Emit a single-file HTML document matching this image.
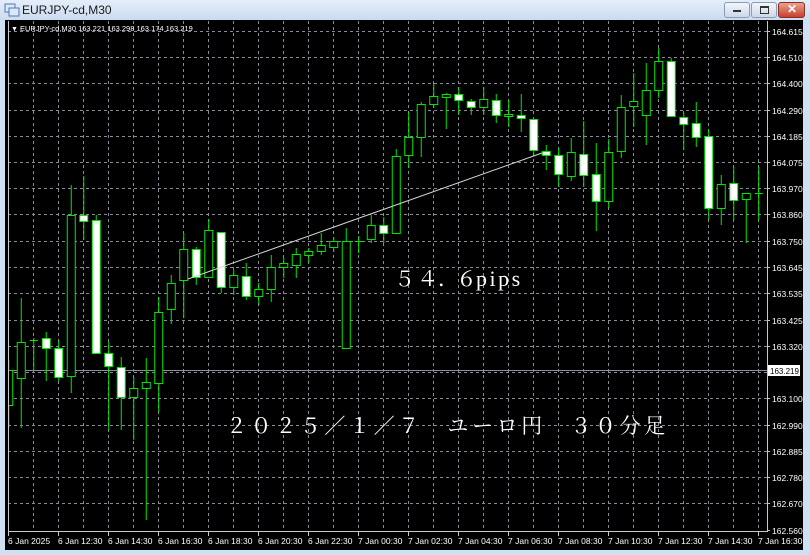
<!DOCTYPE html>
<html><head><meta charset="utf-8"><style>
html,body{margin:0;padding:0;width:810px;height:555px;overflow:hidden;background:#cfe0f2;font-family:"Liberation Sans",sans-serif}
#title{position:absolute;left:0;top:0;width:810px;height:20px;background:linear-gradient(#e4eefa,#cadcf0)}
#title .t{position:absolute;left:22px;top:3px;font-size:12px;color:#1a1a1a}
.btn{position:absolute;top:2px;height:14px;border:1px solid #8a9bb5;border-radius:3px;background:linear-gradient(#f2f6fb,#cdd9e8)}
</style></head><body>
<div id="title">
<svg style="position:absolute;left:4px;top:3px" width="16" height="14"><rect x="1" y="1" width="10" height="8" fill="#dde8f6" stroke="#4a78b8"/><rect x="5" y="5" width="10" height="8" fill="#dde8f6" stroke="#4a78b8"/></svg>
<span class="t">EURJPY-cd,M30</span>
<div class="btn" style="left:724px;width:24px"><div style="position:absolute;left:8px;top:7px;width:8px;height:2px;background:#333"></div></div>
<div class="btn" style="left:751px;width:24px"><div style="position:absolute;left:8px;top:3px;width:7px;height:5px;border:1px solid #333;border-top-width:2px"></div></div>
<div class="btn" style="left:778px;width:25px;background:linear-gradient(#e8a090,#c8402c);border-color:#8a3020"><span style="position:absolute;left:8px;top:-1px;color:#fff;font-weight:bold;font-size:12px">✕</span></div>
</div>
<svg style="position:absolute;left:0;top:0" width="810" height="555" font-family="Liberation Sans, sans-serif">
<rect x="5" y="20" width="798" height="530" fill="#000"/>
<defs><clipPath id="pa"><rect x="8" y="21" width="759" height="511"/></clipPath></defs>
<g stroke="#8a8a98" stroke-width="1" stroke-dasharray="3,3">
<path d="M33.5 21V531M58.5 21V531M83.5 21V531M108.5 21V531M133.5 21V531M158.5 21V531M183.5 21V531M208.5 21V531M233.5 21V531M258.5 21V531M283.5 21V531M308.5 21V531M333.5 21V531M358.5 21V531M383.5 21V531M408.5 21V531M433.5 21V531M458.5 21V531M483.5 21V531M508.5 21V531M533.5 21V531M558.5 21V531M583.5 21V531M608.5 21V531M633.5 21V531M658.5 21V531M683.5 21V531M708.5 21V531M733.5 21V531M758.5 21V531"/>
<path d="M8 31.5H767M8 57.5H767M8 83.5H767M8 110.5H767M8 136.5H767M8 162.5H767M8 188.5H767M8 214.5H767M8 241.5H767M8 267.5H767M8 293.5H767M8 320.5H767M8 346.5H767M8 372.5H767M8 398.5H767M8 425.5H767M8 451.5H767M8 477.5H767M8 503.5H767"/>
</g>
<line x1="8" y1="370.5" x2="767" y2="370.5" stroke="#8890a0"/>
<g clip-path="url(#pa)" stroke="#00e600" stroke-width="1">
<path d="M8.75 360V428M21.25 298V428M33.75 338V370M46.25 332V381M58.75 340V381M71.25 185V393M83.75 176V240M96.25 215V353M108.75 342V430M121.25 357V430M133.75 377V440M146.25 358V520M158.75 297V412M171.25 275V324M183.75 233V318M196.25 247V285M208.75 219V277M221.25 232V293M233.75 270V295M246.25 263V300M258.75 283V305M271.25 255V302M283.75 258V278M296.25 248V278M308.75 248V263M321.25 233V255M333.75 237V252M346.25 228V348M358.75 236V253M371.25 215V243M383.75 217V243M396.25 149V233M408.75 112V168M421.25 102V157M433.75 84V108M446.25 93V129M458.75 87V115M471.25 99V115M483.75 87V115M496.25 94V123M508.75 100V127M521.25 94V132M533.75 119V155M546.25 145V170M558.75 148V187M571.25 138V181M583.75 121V187M596.25 143V231M608.75 139V208M621.25 95V158M633.75 73V127M646.25 63V145M658.75 48V98M671.25 58V116M683.75 113V150M696.25 102V147M708.75 130V220M721.25 175V225M733.75 167V220M746.25 193V243M758.75 167V220"/>
<path d="M29.75 340.5H37.75M354.75 241.5H362.75M754.75 193.5H762.75"/>
<g fill="#000">
<rect x="4.75" y="370.5" width="8" height="35"/>
<rect x="17.25" y="342.5" width="8" height="36"/>
<rect x="67.25" y="215.5" width="8" height="161"/>
<rect x="129.75" y="388.5" width="8" height="9"/>
<rect x="142.25" y="382.5" width="8" height="6"/>
<rect x="154.75" y="312.5" width="8" height="71"/>
<rect x="167.25" y="283.5" width="8" height="26"/>
<rect x="179.75" y="249.5" width="8" height="31"/>
<rect x="204.75" y="230.5" width="8" height="47"/>
<rect x="229.75" y="275.5" width="8" height="12"/>
<rect x="254.75" y="289.5" width="8" height="7"/>
<rect x="267.25" y="267.5" width="8" height="22"/>
<rect x="279.75" y="263.5" width="8" height="4"/>
<rect x="292.25" y="254.5" width="8" height="11"/>
<rect x="304.75" y="251.5" width="8" height="4"/>
<rect x="317.25" y="245.5" width="8" height="6"/>
<rect x="329.75" y="241.5" width="8" height="6"/>
<rect x="342.25" y="241.5" width="8" height="107"/>
<rect x="367.25" y="225.5" width="8" height="14"/>
<rect x="392.25" y="156.5" width="8" height="77"/>
<rect x="404.75" y="137.5" width="8" height="18"/>
<rect x="417.25" y="104.5" width="8" height="33"/>
<rect x="429.75" y="96.5" width="8" height="8"/>
<rect x="442.25" y="94.5" width="8" height="3"/>
<rect x="479.75" y="99.5" width="8" height="8"/>
<rect x="504.75" y="114.5" width="8" height="2"/>
<rect x="567.25" y="152.5" width="8" height="24"/>
<rect x="604.75" y="152.5" width="8" height="49"/>
<rect x="617.25" y="107.5" width="8" height="44"/>
<rect x="629.75" y="101.5" width="8" height="5"/>
<rect x="642.25" y="90.5" width="8" height="25"/>
<rect x="654.75" y="61.5" width="8" height="29"/>
<rect x="717.25" y="184.5" width="8" height="24"/>
<rect x="742.25" y="193.5" width="8" height="6"/>
</g>
<g fill="#fff">
<rect x="42.25" y="338.5" width="8" height="10"/>
<rect x="54.75" y="348.5" width="8" height="29"/>
<rect x="79.75" y="215.5" width="8" height="6"/>
<rect x="92.25" y="220.5" width="8" height="133"/>
<rect x="104.75" y="353.5" width="8" height="13"/>
<rect x="117.25" y="367.5" width="8" height="30"/>
<rect x="192.25" y="249.5" width="8" height="28"/>
<rect x="217.25" y="232.5" width="8" height="55"/>
<rect x="242.25" y="276.5" width="8" height="20"/>
<rect x="379.75" y="225.5" width="8" height="8"/>
<rect x="454.75" y="94.5" width="8" height="6"/>
<rect x="467.25" y="101.5" width="8" height="6"/>
<rect x="492.25" y="100.5" width="8" height="15"/>
<rect x="517.25" y="115.5" width="8" height="3"/>
<rect x="529.75" y="119.5" width="8" height="31"/>
<rect x="542.25" y="151.5" width="8" height="4"/>
<rect x="554.75" y="155.5" width="8" height="19"/>
<rect x="579.75" y="154.5" width="8" height="21"/>
<rect x="592.25" y="174.5" width="8" height="27"/>
<rect x="667.25" y="61.5" width="8" height="55"/>
<rect x="679.75" y="117.5" width="8" height="7"/>
<rect x="692.25" y="123.5" width="8" height="14"/>
<rect x="704.75" y="136.5" width="8" height="72"/>
<rect x="729.75" y="183.5" width="8" height="17"/>
</g>
</g>
<line x1="188" y1="279" x2="542" y2="153" stroke="#d8d8d8" stroke-width="1"/>
<path d="M8.5 21V531.5H767.5V21" fill="none" stroke="#c8c8c8"/>
<g font-size="7.5" fill="#fff">
<text x="11" y="31" font-size="7">▼</text>
<text x="20" y="31">EURJPY-cd,M30  163.221 163.298 163.174 163.219</text>
</g>
<g stroke="#c8c8c8"><path d="M767 31.5h3M767 57.5h3M767 83.5h3M767 110.5h3M767 136.5h3M767 162.5h3M767 188.5h3M767 214.5h3M767 241.5h3M767 267.5h3M767 293.5h3M767 320.5h3M767 346.5h3M767 398.5h3M767 425.5h3M767 451.5h3M767 477.5h3M767 503.5h3M767 530.5h3M8.5 532v4M58.5 532v4M108.5 532v4M158.5 532v4M208.5 532v4M258.5 532v4M308.5 532v4M358.5 532v4M408.5 532v4M458.5 532v4M508.5 532v4M558.5 532v4M608.5 532v4M658.5 532v4M708.5 532v4M758.5 532v4"/></g>
<g font-size="8.5" fill="#fff">
<text x="772" y="35">164.615</text><text x="772" y="61">164.510</text><text x="772" y="87">164.400</text><text x="772" y="114">164.290</text><text x="772" y="140">164.185</text><text x="772" y="166">164.075</text><text x="772" y="192">163.970</text><text x="772" y="218">163.860</text><text x="772" y="245">163.750</text><text x="772" y="271">163.645</text><text x="772" y="297">163.535</text><text x="772" y="324">163.425</text><text x="772" y="350">163.320</text><text x="772" y="402">163.100</text><text x="772" y="429">162.990</text><text x="772" y="455">162.885</text><text x="772" y="481">162.780</text><text x="772" y="507">162.670</text><text x="772" y="534">162.560</text>
</g>
<rect x="768" y="365" width="32" height="11" fill="#fff"/>
<text x="770" y="374" font-size="8" fill="#000">163.219</text>
<g font-size="8.5" fill="#fff">
<text x="8" y="544">6 Jan 2025</text><text x="58" y="544">6 Jan 12:30</text><text x="108" y="544">6 Jan 14:30</text><text x="158" y="544">6 Jan 16:30</text><text x="208" y="544">6 Jan 18:30</text><text x="258" y="544">6 Jan 20:30</text><text x="308" y="544">6 Jan 22:30</text><text x="358" y="544">7 Jan 00:30</text><text x="408" y="544">7 Jan 02:30</text><text x="458" y="544">7 Jan 04:30</text><text x="508" y="544">7 Jan 06:30</text><text x="558" y="544">7 Jan 08:30</text><text x="608" y="544">7 Jan 10:30</text><text x="658" y="544">7 Jan 12:30</text><text x="708" y="544">7 Jan 14:30</text><text x="758" y="544">7 Jan 16:30</text>
</g>
<g fill="#fff" font-family="Liberation Serif, Noto Serif CJK SC, serif" font-size="21">
<text x="394" y="286">５</text><text x="417" y="286">４</text><text x="438" y="286">．</text><text x="456" y="286">６</text><text x="476" y="286" font-size="22" letter-spacing="2.5">pips</text>
<text x="226" y="433" letter-spacing="3.6">２０２５／１／７　ユーロ円　３０分足</text>
</g>
</svg>
</body></html>
